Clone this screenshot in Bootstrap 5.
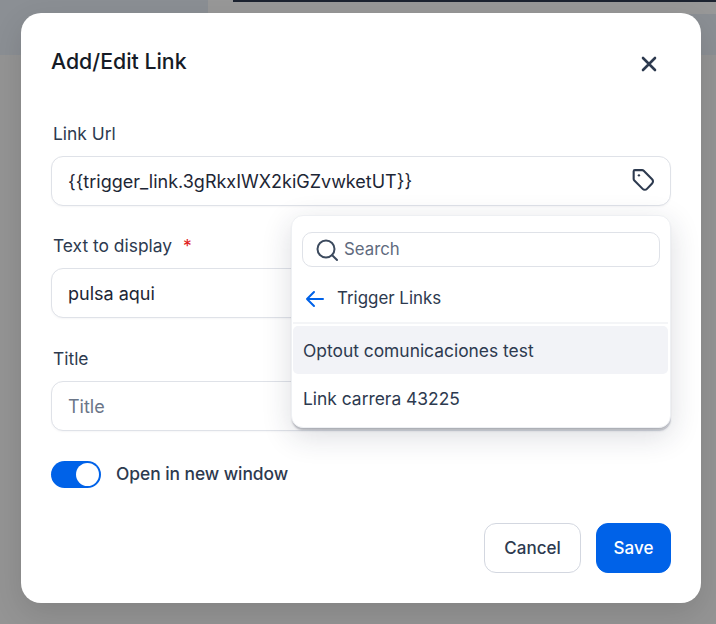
<!DOCTYPE html>
<html lang="en"><head><meta charset="utf-8"><title>Add/Edit Link</title>
<link href="https://cdn.jsdelivr.net/npm/bootstrap@5.3.0/dist/css/bootstrap.min.css" rel="stylesheet">
<style>
html,body{height:624px;overflow:hidden}
body{font-family:Inter,"Liberation Sans",sans-serif;color:#2d3748;padding:13px 15px 21px 21px;
background:
 linear-gradient(#1c2330,#1c2330) 233px 0/483px 2px no-repeat,
 linear-gradient(#989898,#989898) 208px 0/508px 14px no-repeat,
 linear-gradient(#8b8f94,#8b8f94) 0 0/716px 55px no-repeat,
 #949494;}
.dlg{width:680px;height:590px;border:0;border-radius:20px;padding:30px;position:relative;box-shadow:0 10px 30px rgba(0,0,0,.12)}
.dlg-title{font-size:21.3px;font-weight:500;line-height:36px;color:#151b26;margin:0}
.dlg-x{width:24px;height:24px;margin-top:9px;margin-right:10px;color:#2d3a4f}
.fld-label{font-size:17.4px;font-weight:400;line-height:24px;color:#2d3a4f;margin:0 0 10px 2px;display:block}
.req{color:#e02020;margin-left:6px}
.fld{height:50px;border:1px solid #dfe2e8;border-radius:12px;font-size:18px;color:#1d2635;padding:0 16px;box-shadow:0 1px 2px rgba(16,24,40,.04)}
.fld::placeholder{color:#6b7688}
.fld-wrap{margin-bottom:28px}
.tag-ic{right:14px;top:10px;width:28px;height:28px;color:#2d3a4f}
.tog{width:50px;height:27px;border-radius:14px;background:#0062e8;padding:2px 2px 2px 25px}
.tog-knob{width:23px;height:23px;border-radius:50%;background:#fff}
.tog-text{font-size:17.4px;font-weight:500;letter-spacing:-.05px;color:#2d3a4f;margin-left:15px}
.btn-c,.btn-s{height:50px;border-radius:12px;font-size:17px;font-weight:500;padding:2px 0 0;display:flex;align-items:center;justify-content:center}
.btn-c{width:97px;border:1px solid #d3d7e0;background:#fff;color:#2d3a4f}
.btn-s{width:75px;border:1px solid #0062e8;background:#0062e8;color:#fff;margin-left:15px}
.pick{left:270px;top:202px;width:380px;height:213px;border-radius:12px;background:#fff;border:1px solid #eef0f3;box-shadow:0 3px 2px -1px rgba(60,65,80,.35),0 8px 30px rgba(30,40,60,.16);padding:16px 2px 0 1px;z-index:5}
.pick-search{height:35px;margin:0 8px 0 9px;border:1px solid #dfe2e8;border-radius:10px;padding-left:12px;font-size:16.8px;color:#5f6b7e}
.pick-search svg{width:24px;height:24px;color:#3c4a5e;margin-right:5px;flex:none}
.pick-head{height:52px;padding:3px 0 0 12px;font-size:16.9px;font-weight:400;color:#2d3a4f;border-bottom:2px solid #f4f5f7;margin-bottom:2px;margin-top:5px}
.pick-head svg{width:20px;height:20px;color:#0062e8;margin-right:12px}
.pick-opt{height:48px;padding:2px 0 0 10px;font-size:17.4px;color:#2d3a4f;border-radius:5px}
.pick-opt.on{background:#f2f3f7}
.foot{margin-top:35px}
.head-row{height:66px}
.first-fld{margin-top:13px}
.last-fld{margin-top:1px}
.tog-row{margin-top:30px}
</style></head><body>
<div class="card dlg">
 <div class="d-flex justify-content-between head-row">
  <h5 class="dlg-title">Add/Edit Link</h5>
  <svg class="dlg-x" viewBox="0 0 24 24" fill="none" stroke="currentColor" stroke-width="2.6" stroke-linecap="round"><path d="M6 6l12 12M18 6L6 18"/></svg>
 </div>
 <div class="fld-wrap position-relative first-fld"><label class="fld-label">Link Url</label>
  <div class="position-relative"><input class="form-control fld" value="{{trigger_link.3gRkxIWX2kiGZvwketUT}}">
  <svg class="tag-ic position-absolute" viewBox="0 0 24 24" fill="none" stroke="currentColor" stroke-width="1.8" stroke-linejoin="round"><path d="M4 4.5a1 1 0 0 1 1-1h6.2a2 2 0 0 1 1.4.6l7.2 7.2a2.6 2.6 0 0 1 0 3.7l-4.4 4.6a2.6 2.6 0 0 1-3.7 0L4.6 12.5a2 2 0 0 1-.6-1.4z"/><circle cx="8.5" cy="8" r="1" fill="currentColor" stroke="none"/></svg></div>
 </div>
 <div class="fld-wrap"><label class="fld-label">Text to display <span class="req">*</span></label>
  <input class="form-control fld" value="pulsa aqui"></div>
 <div class="last-fld"><label class="fld-label">Title</label>
  <input class="form-control fld" placeholder="Title"></div>
 <div class="d-flex align-items-center tog-row">
  <div class="tog"><div class="tog-knob"></div></div><span class="tog-text">Open in new window</span>
 </div>
 <div class="d-flex justify-content-end foot">
  <button class="btn btn-c">Cancel</button><button class="btn btn-s">Save</button>
 </div>
 <div class="pick position-absolute">
  <div class="pick-search d-flex align-items-center">
   <svg viewBox="0 0 24 24" fill="none" stroke="currentColor" stroke-width="2" stroke-linecap="round"><circle cx="11" cy="11" r="8.5"/><path d="M17.2 17.2L22 22"/></svg>Search</div>
  <div class="pick-head d-flex align-items-center">
   <svg viewBox="0 0 20 20" fill="none" stroke="currentColor" stroke-width="2" stroke-linecap="round" stroke-linejoin="round"><path d="M18 10H2M9 3l-7 7 7 7"/></svg>Trigger Links</div>
  <div class="pick-opt on d-flex align-items-center">Optout comunicaciones test</div>
  <div class="pick-opt d-flex align-items-center">Link carrera 43225</div>
 </div>
</div>
<script src="https://cdn.jsdelivr.net/npm/bootstrap@5.3.0/dist/js/bootstrap.bundle.min.js"></script>
</body></html>
